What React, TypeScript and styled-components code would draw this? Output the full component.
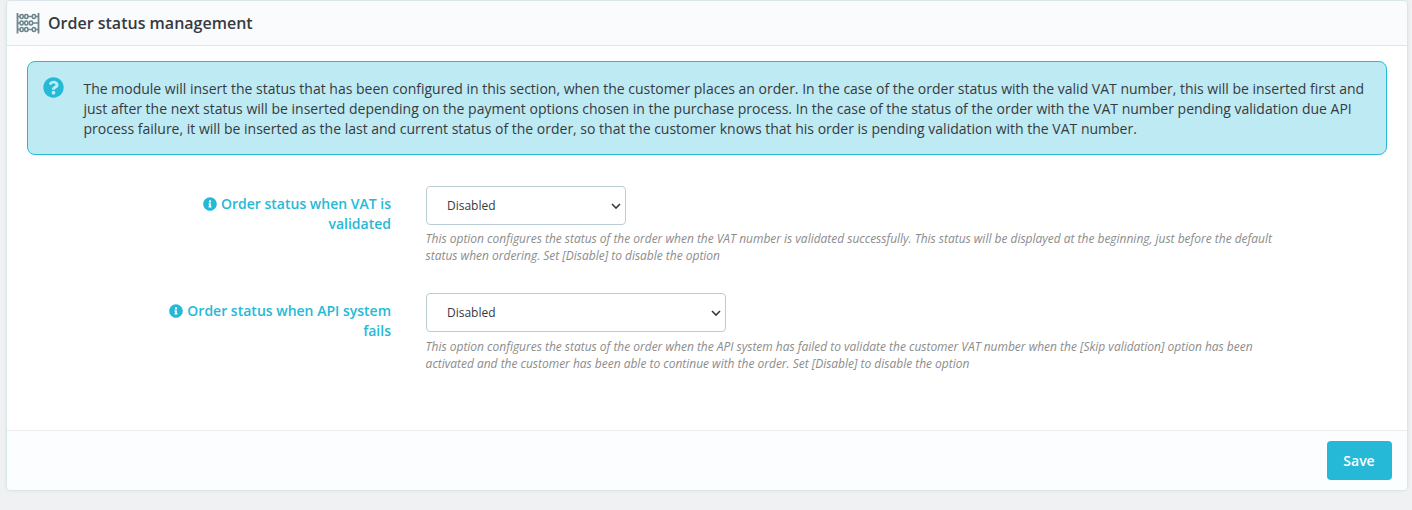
import React from "react";
import styled, { createGlobalStyle } from "styled-components";
import { FaInfoCircle, FaQuestionCircle } from "react-icons/fa";

const GlobalStyle = createGlobalStyle`
  * { box-sizing: border-box; }
  body {
    margin: 0;
    background: #eff1f2;
    font-family: "Open Sans", sans-serif;
    font-size: 14px;
    line-height: 20px;
    color: #363a41;
    overflow: hidden;
  }
`;

const Page = styled.main`
  padding: 0 4px 20px 6px;
  height: 510px;
`;

const Panel = styled.form`
  display: flex;
  flex-direction: column;
  height: 491px;
  background: #fff;
  border: 1px solid #dbe6e9;
  border-radius: 5px;
  box-shadow: 0 0 4px 0 rgba(0, 0, 0, 0.06);
  overflow: hidden;
`;

const PanelHeader = styled.header`
  display: flex;
  align-items: center;
  gap: 8px;
  height: 45px;
  padding: 0 9px;
  background: #fafbfc;
  border-bottom: 1px solid #dbe6e9;
`;

const AbacusIcon = styled.svg`
  width: 24px;
  height: 22px;
  fill: none;
  stroke: #6c868e;
`;

const Title = styled.h3`
  margin: 0;
  font-size: 16px;
  font-weight: 600;
  line-height: 22px;
`;

const PanelBody = styled.div`
  flex: 1;
  padding: 15px 20px 0;
`;

const Alert = styled.div`
  display: flex;
  height: 94px;
  padding: 17px 15px 0;
  margin-bottom: 31px;
  background: #beeaf3;
  border: 1px solid #25b9d7;
  border-radius: 8px;
`;

const AlertIcon = styled(FaQuestionCircle)`
  flex: none;
  width: 21px;
  height: 21px;
  margin: -2px 19.5px 0 0;
  color: #25b9d7;
`;

const AlertText = styled.p`
  margin: 0;
  width: 1290px;
`;

const Row = styled.div`
  display: flex;
  height: 107px;
`;

const Label = styled.label`
  width: 364px;
  padding: 8px 0 0 130px;
  margin-right: 35px;
  text-align: right;
  font-weight: 600;
  color: #25b9d7;
`;

const LabelIcon = styled(FaInfoCircle)`
  width: 14px;
  height: 14px;
  margin-right: 4px;
  vertical-align: -2px;
`;

const Field = styled.div`
  width: 860px;
`;

const SelectBox = styled.div<{ $width: number }>`
  position: relative;
  width: ${(p) => p.$width}px;
`;

const Select = styled.select`
  display: block;
  appearance: none;
  width: 100%;
  height: 39px;
  padding: 0 24px 0 20px;
  font: 12px "Open Sans", sans-serif;
  color: #363a41;
  background: #fff;
  border: 1px solid #bbcdd2;
  border-radius: 4px;
`;

const Chevron = styled.svg`
  position: absolute;
  top: 16px;
  right: 5px;
  width: 10px;
  height: 8px;
  fill: none;
  stroke: #363a41;
  stroke-width: 1.6;
  pointer-events: none;
`;

const Help = styled.p<{ $gap: number }>`
  margin: ${(p) => p.$gap}px 0 0 -0.4px;
  font-size: 12px;
  font-style: italic;
  line-height: 17px;
  letter-spacing: -0.016px;
  color: #8c8c8c;
`;

const PanelFooter = styled.footer`
  display: flex;
  justify-content: flex-end;
  height: 60px;
  padding: 10px 15px;
  background: #fcfdfe;
  border-top: 1px solid #eaeef0;
`;

const SaveButton = styled.button`
  width: 65px;
  height: 39px;
  padding: 0 1px 0 0;
  font: 600 14px "Open Sans", sans-serif;
  color: #fff;
  background: #25b9d7;
  border: 0;
  border-radius: 4px;
`;

function StatusSelect({ id, width }: { id: string; width: number }) {
  return (
    <SelectBox $width={width}>
      <Select id={id}>
        <option>Disabled</option>
      </Select>
      <Chevron viewBox="0 0 10 8">
        <path d="M1 2l4 4 4-4" />
      </Chevron>
    </SelectBox>
  );
}

export default function App() {
  return (
    <Page>
      <GlobalStyle />
      <Panel>
        <PanelHeader>
          <AbacusIcon viewBox="0 0 24 22">
            <path d="M1.5 1v20.5M22.5 1v20.5" strokeWidth="1.8" />
            <path d="M1 4.5h3M12 4.5h4M20 4.5h3M1 11h3M16 11h7M1 17.5h3M12 17.5h4M20 17.5h3" strokeWidth="1.3" />
            <g strokeWidth="1.6">
              <rect x="4" y="2.5" width="3.2" height="4" rx="1.5" />
              <rect x="8.7" y="2.5" width="3.2" height="4" rx="1.5" />
              <rect x="16.3" y="2.5" width="3.2" height="4" rx="1.5" />
              <rect x="4" y="9" width="3.2" height="4" rx="1.5" />
              <rect x="8.7" y="9" width="3.2" height="4" rx="1.5" />
              <rect x="13.4" y="9" width="3.2" height="4" rx="1.5" />
              <rect x="4" y="15.5" width="3.2" height="4" rx="1.5" />
              <rect x="8.7" y="15.5" width="3.2" height="4" rx="1.5" />
              <rect x="16.3" y="15.5" width="3.2" height="4" rx="1.5" />
            </g>
          </AbacusIcon>
          <Title>Order status management</Title>
        </PanelHeader>
        <PanelBody>
          <Alert>
            <AlertIcon />
            <AlertText>
              The module will insert the status that has been configured in this section, when the customer places an
              order. In the case of the order status with the valid VAT number, this will be inserted first and just
              after the next status will be inserted depending on the payment options chosen in the purchase process. In
              the case of the status of the order with the VAT number pending validation due API process failure, it
              will be inserted as the last and current status of the order, so that the customer knows that his order
              is pending validation with the VAT number.
            </AlertText>
          </Alert>
          <Row>
            <Label htmlFor="status-valid">
              <LabelIcon />
              Order status when VAT is validated
            </Label>
            <Field>
              <StatusSelect id="status-valid" width={200} />
              <Help $gap={5}>
                This option configures the status of the order when the VAT number is validated successfully. This
                status will be displayed at the beginning, just before the default status when ordering. Set [Disable]
                to disable the option
              </Help>
            </Field>
          </Row>
          <Row>
            <Label htmlFor="status-fail">
              <LabelIcon />
              Order status when API system fails
            </Label>
            <Field>
              <StatusSelect id="status-fail" width={300} />
              <Help $gap={6}>
                This option configures the status of the order when the API system has failed to validate the customer
                VAT number when the [Skip validation] option has been activated and the customer has been able to
                continue with the order. Set [Disable] to disable the option
              </Help>
            </Field>
          </Row>
        </PanelBody>
        <PanelFooter>
          <SaveButton type="button">Save</SaveButton>
        </PanelFooter>
      </Panel>
    </Page>
  );
}
